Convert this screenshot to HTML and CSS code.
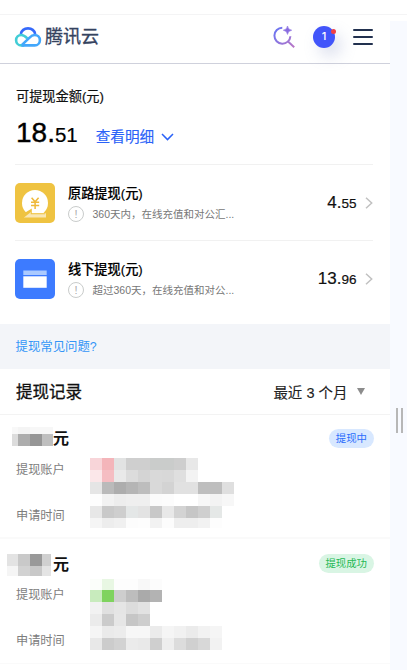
FILE: index.html
```
<!DOCTYPE html>
<html lang="zh-CN">
<head>
<meta charset="utf-8">
<title>腾讯云 提现</title>
<link rel="stylesheet" href="styles.css">
</head>
<body>
<div class="topline"></div>
<div class="layout">
<main class="page">
  <header class="header">
    <svg class="logo" width="28" height="20" viewBox="0 0 28 20" fill="none" stroke-width="2.6">
      <path d="M6.8 7C8.6-.5 19.4-.5 21.2 7" stroke="#3569fb"/>
      <path d="M13.3 11.3C11.2 9.2 9.7 8 7.3 8a5.2 5.2 0 0 0 0 10.4h3" stroke="#42cdd6"/>
      <path d="M7.5 18.4h13.2a5.2 5.2 0 0 0 0-10.4c-2.5 0-3.8 1.2-5.4 2.8L8 17.9" stroke="#43a7fb"/>
    </svg>
    <span class="brand">腾讯云</span>
    <svg class="search" width="23" height="24" viewBox="0 0 23 24" fill="none">
      <defs><linearGradient id="violet" x1="0" y1="0" x2="1" y2="1"><stop stop-color="#6675f5"/><stop offset="1" stop-color="#ba76c5"/></linearGradient></defs>
      <path d="M9.3 2.7A8 8 0 1 0 17.4 11.2Q17.3 14 15 16.5L21.2 22.2" stroke="url(#violet)" stroke-width="2"/>
      <path d="M14.5 1Q15 4.8 18.7 5.2Q15 5.7 14.5 9.4Q14 5.7 10.3 5.2Q14 4.8 14.5 1Z" fill="#886be0" stroke="#886be0" stroke-width=".6"/>
    </svg>
    <span class="avatar">1<i class="dot"></i></span>
    <span class="menu"><i></i><i></i><i></i></span>
  </header>

  <section class="balance">
    <div class="label">可提现金额(元)</div>
    <div class="total"><span><b>18.</b><small>51</small></span>
      <a>查看明细<svg width="13" height="8" viewBox="0 0 13 8" fill="none"><path d="M1 1l5.5 5.6L12 1" stroke="#2a62f8" stroke-width="1.5"/></svg></a>
    </div>
  </section>

  <section class="methods">
    <div class="method">
      <svg class="tile" width="40" height="40" viewBox="0 0 40 40">
        <rect width="40" height="40" rx="5" fill="#efc341"/>
        <circle cx="20" cy="20" r="13" fill="#fff"/>
        <path d="M9 30h22v4.5H9z" fill="#f9e7b5"/>
        <path d="M7 31.5l9.8-6v4.7h14l-1 1H15.7v-2L9 34.5H7z" fill="#efc341"/>
        <path d="M16.6 14.7l3.5 4.1 3.5-4.1M16 19.3h8.2M16 22.4h8.2M20.1 18.8V26" fill="none" stroke="#efb93a" stroke-width="1.5"/>
      </svg>
      <div class="info"><div class="name">原路提现(元)</div><div class="desc"><i>!</i>360天内，在线充值和对公汇...</div></div>
      <div class="amount">4.<small>55</small></div>
      <svg class="chev" width="8" height="12" viewBox="0 0 8 12" fill="none"><path d="M1 .7L6.7 6 1 11.3" stroke="#c1c1c1" stroke-width="1.5"/></svg>
    </div>
    <div class="method">
      <svg class="tile" width="40" height="40" viewBox="0 0 40 40">
        <rect width="40" height="40" rx="5" fill="#3d7bff"/>
        <path d="M8.3 11.5h23.4V16H8.3z" fill="#abcaff"/><path d="M8.3 17.3h23.4v11.5H8.3z" fill="#fff"/>
      </svg>
      <div class="info"><div class="name">线下提现(元)</div><div class="desc"><i>!</i>超过360天，在线充值和对公...</div></div>
      <div class="amount">13.<small>96</small></div>
      <svg class="chev" width="8" height="12" viewBox="0 0 8 12" fill="none"><path d="M1 .7L6.7 6 1 11.3" stroke="#c1c1c1" stroke-width="1.5"/></svg>
    </div>
  </section>

  <div class="faq">提现常见问题?</div>
  <div class="records"><h2>提现记录</h2><span>最近 3 个月</span><i class="caret"></i></div>

  <article class="record first">
    <div class="rhead"><svg class="mask" width="53" height="19" data-x="12,18,30,42,53" data-y="0,7,19" data-c="f8f8f8 f4f4f4 f7f7f7 f7f7f7|dcdcdc adadad 969696 bfbfbf"></svg><strong>元</strong><span class="tag blue">提现中</span></div>
    <div class="rbody">
      <div class="keys"><span>提现账户</span><span>申请时间</span></div>
      <svg class="mosaic" width="144" height="70" data-y="0,12,24,36,48,60,70" data-c="f8d5d9 f4b5ba e2e3e3 cfcfcf cfcfcf cacccb cacccb cecece e8e8e8|fbe7e9 f5bdc2 e9e9e9 dcdcdc d4d4d4 d9d9d9 d8d8d8 dfdfdf f3f3f3|e5e5e5 bababa adadad b5b5b5 bdbdbd d9d9d9 d3d3d3 e1e1e1 e1e1e1 bebebe bebebe dfdfdf|fdfdfd f2f2f2 ededed efefef efefef fbfbfb fcfcfc ffffff ffffff f7f7f7 f3f3f3 f7f7f7|e7e7e7 c9c9c9 cecece e4e7e7 e3e3e3 c8c8c8 e8e8e8 d3d3d3 c6c6c6 cfcfcf e5e8e7|f5f5f5 ededed f0f0f0 fcfcfc fdfdfd f2f2f2 fcfcfc eeeeee eeeeee f2f2f2 fdfdfd"></svg>
    </div>
  </article>
  <article class="record second">
    <div class="rhead"><svg class="mask" width="53" height="22" data-x="7,18,30,42,51" data-y="0,12,22" data-c="e3e3e3 c9c9c9 999999 d0d0d0|f5f5f5 d2d2d2 c8c8c8 e4e4e4"></svg><strong>元</strong><span class="tag green">提现成功</span></div>
    <div class="rbody">
      <div class="keys"><span>提现账户</span><span>申请时间</span></div>
      <svg class="mosaic" width="144" height="71" data-y="0,11,23,35,47,59,71" data-c="fbfefa e8f7e3 fdfdfd fdfdfd f8f8f8 fcfcfc|c8ebbd 7fd35e cecece bdbdbd aaaaaa b3b3b3|f2f2f2 e0e0e0 e5e5e5 dcdcdc e2e2e2|ebebeb cbcbcb e6e6e6 c6c6c6 cecece|f5f5f5 eaeaea ececec f7f7f7 f7f7f7 ebebeb f5f5f5 f1f1f1 ebebeb f2f2f2 f5f5f5|e8e8e8 cccccc d2d2d2 ebebeb e9e9e9 cfcfcf eeeeee dcdcdc d0d0d0 d8d8d8 f2f2f2"></svg>
    </div>
  </article>
</main>
<aside class="side"><div class="grip"></div></aside>
</div>
<script src="mosaic.js"></script>
</body>
</html>
```
FILE: styles.css
```
* { box-sizing: border-box; }
body {
  margin: 0; width: 407px; height: 670px; overflow: hidden; background: #fff; color: #111;
  font-family: "Liberation Sans", "Noto Sans CJK SC", sans-serif;
}
.topline { height: 15px; border-bottom: 1px solid #f4f4f5; }
.layout { display: flex; height: 655px; }
.page { width: 390px; }
.side { width: 17px; margin-top: 6px; background: #f8faff; padding: 387px 0 0 6px; }
.grip { width: 7px; height: 25px; border: solid #b7b7b7; border-width: 0 2px; }

.header { display: flex; align-items: center; height: 49px; padding: 0 17px 5px 14px; border-bottom: 1px solid #cfd1dc; }
.brand { margin-left: 3px; padding-top: 1px; font-size: 18px; line-height: 24px; color: #35435f; -webkit-text-stroke: .3px; }
.search { margin-left: auto; margin-right: 17px; }
.avatar {
  position: relative; width: 22px; height: 22px; border-radius: 50%; background: #4255fa; color: #fff;
  font: 500 11px/21px Inter, sans-serif; text-align: center; box-shadow: 6px 8px 16px #8090c04d;
}
.dot { position: absolute; right: -1px; top: 3px; width: 5px; height: 5px; border-radius: 50%; background: #f13f44; }
.menu { display: flex; flex-direction: column; gap: 5px; width: 20px; margin-left: 18px; }
.menu i { height: 2px; border-radius: 1px; background: #22314f; }

.balance { height: 100px; padding: 23px 15px 0 16px; }
.label { font-size: 13.2px; line-height: 20px; -webkit-text-stroke: .2px; }
.total { display: flex; align-items: baseline; gap: 18px; height: 40px; line-height: 40px; margin-top: 6px; color: #000; }
.total b { font-weight: 400; font-size: 28px; -webkit-text-stroke: .4px #000; }
.total small { font-size: 20.5px; -webkit-text-stroke: .2px; }
.total a { font-size: 14.6px; color: #2a62f8; -webkit-text-stroke: .15px; }
.total svg { margin-left: 7px; vertical-align: 1px; }

.methods { padding: 0 17px 0 15px; height: 160px; }
.method { display: flex; align-items: center; height: 76px; border-top: 1px solid #f1f1f1; }
.tile { flex: none; }
.info { margin-left: 13px; padding-top: 2px; }
.name { font-size: 13.2px; line-height: 20px; font-weight: 500; color: #000; -webkit-text-stroke: .15px; }
.desc { display: flex; align-items: center; font-size: 10.5px; line-height: 20px; color: #777; white-space: nowrap; }
.desc i { width: 16px; height: 16px; margin-right: 8.5px; border: 1px solid #c9cccb; border-radius: 50%; font: 11px/14px "Liberation Sans"; text-align: center; color: #aaa; }
.amount { margin-left: auto; font-size: 17px; color: #111; -webkit-text-stroke: .2px; }
.amount small { font-size: 13.5px; }
.chev { margin-left: 8.5px; }

.faq { height: 45px; padding-left: 15.5px; background: #f3f5f9; color: #3495f7; font-size: 12.4px; line-height: 46px; }
.records { display: flex; align-items: center; height: 46px; padding: 0 25px 0 16px; border-bottom: 1px solid #f3f3f3; }
.records h2 { margin: 0 auto 0 0; font-size: 16.5px; line-height: 24px; font-weight: 400; padding-top: 1px; -webkit-text-stroke: .3px; }
.records span { font-size: 14.5px; color: #222; margin-top: -1px; -webkit-text-stroke: .1px; }
.caret { margin-left: 9.5px; border: solid transparent; border-width: 7px 4.5px 0; border-top-color: #8c8c8c; }

.record { display: flex; flex-direction: column; border-bottom: 2px solid #fafafa; }
.first { height: 124px; padding-top: 12px; }
.second { height: 125px; padding-top: 15px; border-bottom-width: 1px; }
.rhead { display: flex; height: 22px; align-items: center; }
.mask { flex: none; align-self: flex-start; }
.rhead strong { font-size: 16px; line-height: 22px; padding-top: 2px; }
.second strong { padding-top: 0; }
.tag { margin: 0 16.5px 0 auto; padding: 0 6.5px; border-radius: 10px; font-size: 10.4px; line-height: 19px; }
.second .tag { margin-top: -3px; }
.blue { background: #d8e8ff; color: #2a6cfc; }
.green { background: #d9f5e4; color: #26b956; }
.rbody { display: flex; padding-left: 16px; }
.first .rbody { padding-top: 9px; }
.second .rbody { padding-top: 3px; }
.keys { display: flex; flex-direction: column; gap: 28px; width: 74px; font-size: 12.2px; line-height: 18px; color: #7d7d7d; }
.first .keys { padding-top: 3px; }
.second .keys { padding-top: 7px; }
```
FILE: mosaic.js
```
// Draws the privacy mosaics from their cell boundaries and colours.
document.querySelectorAll('svg[data-c]').forEach(function (svg) {
  var ys = svg.dataset.y.split(',').map(Number);
  var xs = svg.dataset.x ? svg.dataset.x.split(',').map(Number)
    : Array.from({ length: 13 }, function (_, i) { return i * 12; });
  svg.dataset.c.split('|').forEach(function (row, r) {
    row.split(' ').forEach(function (color, c) {
      var cell = document.createElementNS('http://www.w3.org/2000/svg', 'rect');
      cell.setAttribute('x', xs[c]);
      cell.setAttribute('y', ys[r]);
      cell.setAttribute('width', xs[c + 1] - xs[c]);
      cell.setAttribute('height', ys[r + 1] - ys[r]);
      cell.setAttribute('fill', '#' + color);
      svg.appendChild(cell);
    });
  });
});
```
